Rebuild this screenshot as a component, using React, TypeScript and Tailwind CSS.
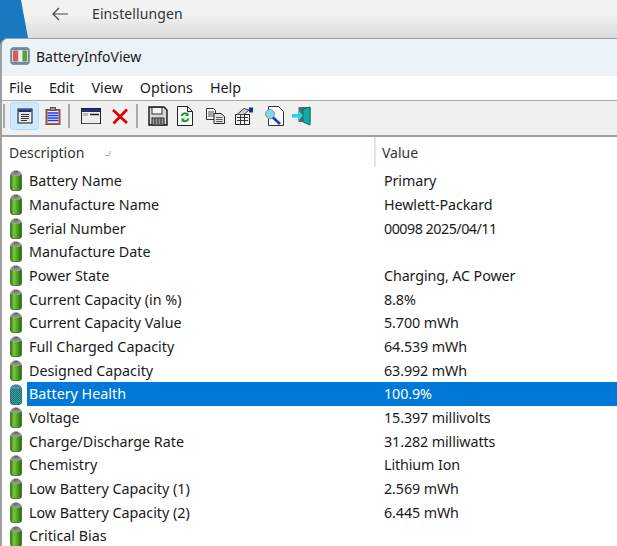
const font = "font-['Noto_Sans','Open_Sans',sans-serif]";

const rows: [string, string][] = [
	["Battery Name", "Primary"],
	["Manufacture Name", "Hewlett-Packard"],
	["Serial Number", "00098 2025/04/11"],
	["Manufacture Date", ""],
	["Power State", "Charging, AC Power"],
	["Current Capacity (in %)", "8.8%"],
	["Current Capacity Value", "5.700 mWh"],
	["Full Charged Capacity", "64.539 mWh"],
	["Designed Capacity", "63.992 mWh"],
	["Battery Health", "100.9%"],
	["Voltage", "15.397 millivolts"],
	["Charge/Discharge Rate", "31.282 milliwatts"],
	["Chemistry", "Lithium Ion"],
	["Low Battery Capacity (1)", "2.569 mWh"],
	["Low Battery Capacity (2)", "6.445 mWh"],
	["Critical Bias", ""],
];

const BatteryIcon = ({ selected }: { selected?: boolean }) => (
	<svg width="12" height="21" viewBox="0 0 12 21" className="ml-[1px] shrink-0">
		<defs>
			<linearGradient id="batt" x1="0" x2="1" y1="0" y2="0">
				<stop offset="0" stopColor="#2a7010" />
				<stop offset="0.3" stopColor="#7cc83c" />
				<stop offset="0.7" stopColor="#43981a" />
				<stop offset="1" stopColor="#26660e" />
			</linearGradient>
			<pattern id="battSel" width="2" height="2" patternUnits="userSpaceOnUse">
				<rect width="2" height="2" fill="#1668a8" />
				<rect width="1" height="1" fill="#3fae62" />
				<rect x="1" y="1" width="1" height="1" fill="#3fae62" />
			</pattern>
		</defs>
		<rect x="0.5" y="3" width="11" height="17.500" rx="2.500" fill={selected ? "url(#battSel)" : "url(#batt)"} stroke={selected ? "#1a5f90" : "#3b6b26"} strokeWidth="0.8" />
		<ellipse cx="6" cy="3.500" rx="5" ry="2.200" fill={selected ? "#5a8fb8" : "#8a8f88"} stroke={selected ? "#2f6f98" : "#a5a8a2"} strokeWidth="0.8" />
		<rect x="3.500" y="0.500" width="5" height="2.500" rx="1" fill={selected ? "#4a7fa8" : "#6f6f6f"} />
	</svg>
);

const AppIcon = () => (
	<svg width="20" height="18" viewBox="0 0 20 18">
		<rect x="0.500" y="0.500" width="19" height="17" rx="3" fill="#7088a0" stroke="#8a97a5" />
		<rect x="2" y="3" width="16" height="12" fill="#cfd6dc" />
		<rect x="3" y="3.500" width="5" height="11" rx="1" fill="#d8604f" />
		<rect x="9" y="3.500" width="3" height="11" fill="#eef0ee" />
		<rect x="12.500" y="3.500" width="4.500" height="11" rx="1" fill="#5f9e36" />
	</svg>
);

const ToolIcons = {
	props: () => (
		<svg width="16" height="16" viewBox="0 0 16 16">
			<rect x="1" y="1" width="14" height="14" fill="#e8e8e8" stroke="#111" />
			<rect x="1.500" y="1.500" width="13" height="2.500" fill="#1c2f80" />
			<path d="M4 6.500h8M4 8.500h8M4 10.500h8M4 12.500h6" stroke="#333" />
		</svg>
	),
	clip: () => (
		<svg width="16" height="18" viewBox="0 0 16 18">
			<rect x="1" y="2.500" width="14" height="15" fill="#a8653a" stroke="#7a5a3a" />
			<rect x="2.500" y="4" width="11" height="12" fill="#e8ecff" />
			<path d="M2.500 6h11M2.500 8.500h11M2.500 11h11M2.500 13.500h11" stroke="#2438e0" strokeWidth="1.400" />
			<rect x="5.500" y="0.500" width="5" height="3" fill="#8a9a8a" stroke="#555" />
		</svg>
	),
	win: () => (
		<svg width="20" height="16" viewBox="0 0 20 16">
			<rect x="0.500" y="0.500" width="19" height="15" fill="#ededed" stroke="#222" />
			<rect x="1" y="1" width="18" height="3" fill="#1c2f80" />
			<rect x="2" y="5" width="5" height="3" fill="#bbb" />
			<path d="M9 6.500h9" stroke="#222" strokeWidth="1.600" />
			<path d="M18.500 15.500H1" stroke="#555" />
		</svg>
	),
	del: () => (
		<svg width="18" height="17" viewBox="0 0 18 17">
			<path d="M2 2l14 13M16 1.500L2.500 15.500" stroke="#e00000" strokeWidth="2.800" />
		</svg>
	),
	save: () => (
		<svg width="20" height="20" viewBox="0 0 20 20">
			<path d="M1 1h15l3 3v15H1z" fill="#d8d8d8" stroke="#111" strokeWidth="1.400" />
			<rect x="4" y="1.500" width="10" height="6.500" fill="#f4f4f4" stroke="#333" />
			<rect x="4" y="12" width="12" height="7" fill="#9a9a9a" stroke="#222" />
			<path d="M7 13v5M10 13v5M13 13v5" stroke="#222" />
		</svg>
	),
	reload: () => (
		<svg width="16" height="20" viewBox="0 0 16 20">
			<path d="M.5 .5h10l5 5v14H.5z" fill="#fbfbfb" stroke="#222" />
			<path d="M10.500 .5v5h5" fill="none" stroke="#222" />
			<path d="M4.500 10a3.500 3.500 0 0 1 6-1.500M11.500 12.500a3.500 3.500 0 0 1-6 1.500" fill="none" stroke="#169a35" strokeWidth="2" />
			<path d="M11.500 6v4h-3.500M4.500 16.500v-4H8" fill="#169a35" />
		</svg>
	),
	copy: () => (
		<svg width="19" height="16" viewBox="0 0 19 16">
			<path d="M.5 .5h7l2 2v9h-9z" fill="#f3f3f3" stroke="#333" />
			<path d="M2 4h6M2 6h6M2 8h6" stroke="#555" />
			<path d="M8 5.500h7l3.500 3v7H8z" fill="#e4e4e4" stroke="#222" />
			<path d="M10 9.500h6.500M10 11.500h6.500M10 13.500h6.500" stroke="#555" />
		</svg>
	),
	html: () => (
		<svg width="20" height="18" viewBox="0 0 20 18">
			<path d="M1.500 7.500h14v10h-14z" fill="#f0f0f0" stroke="#222" />
			<path d="M3 7.500l7-6 5 1.500-5 4.500z" fill="#ccc" stroke="#444" />
			<path d="M3 10.500h11M3 13.500h11M6.500 8v9M10.500 8v9" stroke="#333" />
			<rect x="15" y="0.500" width="4" height="5" fill="#1c2f80" />
		</svg>
	),
	find: () => (
		<svg width="19" height="20" viewBox="0 0 19 20">
			<path d="M3.500 .5h10l5 5v14h-15z" fill="#fafafa" stroke="#333" />
			<circle cx="5" cy="8" r="4.500" fill="#7fd8e8" stroke="#7a9aaa" />
			<path d="M8 11.500l7 6.500" stroke="#1a3fc0" strokeWidth="2.800" />
		</svg>
	),
	exit: () => (
		<svg width="20" height="20" viewBox="0 0 20 20">
			<path d="M6.500 1h12v15h-12z" fill="#666" />
			<path d="M11 3l7-2v18l-7-3z" fill="#16a8a8" stroke="#0b6a6a" />
			<path d="M0 8h6V4l5 5.500L6 15v-3.500H0z" fill="#19d8e8" />
		</svg>
	),
};

const ToolButton = ({ children, active, className = "" }: { children: React.ReactNode; active?: boolean; className?: string }) => (
	<div className={`flex h-[28px] shrink-0 items-center justify-center rounded-[4px] border ${active ? "border-[#b4dcfa] bg-[#cde8ff]" : "border-transparent"} ${className}`}>
		{children}
	</div>
);

const Sep = () => <div className="h-[24px] w-[2px] bg-[#a8a8a8]" />;

const App = () => {
	return (
		<div className={`flex h-[546px] w-[617px] flex-col overflow-hidden bg-[#2c6ea6] ${font} text-[#1a1a1a]`}>
			<div className="flex h-[38px] shrink-0 items-start bg-gradient-to-b from-[#f2f2f2] from-40% to-[#dadada]">
				<div className="h-full w-[28px] bg-[#1878c0] [clip-path:polygon(0_0,21px_0,28px_100%,0_100%)]" />
				<svg width="18" height="14" viewBox="0 0 18 14" className="ml-[23px] mt-[7px]">
					<path d="M17 7H2M8 1L2 7l6 6" fill="none" stroke="#444" strokeWidth="1.200" />
				</svg>
				<span className="ml-[23px] text-[14px] leading-[28px] tracking-[0.1px] text-[#333]">Einstellungen</span>
			</div>
			<div className="flex min-h-0 flex-1 flex-col overflow-hidden rounded-tl-[8px] border-t border-l-2 border-[#a0a0a0] bg-white">
				<div className="flex h-[37px] shrink-0 items-start gap-[6px] bg-[#ecf3f8] pt-[8px] pl-[8px] text-[14px] leading-[20px]">
					<AppIcon />
					<span>BatteryInfoView</span>
				</div>
				<div className="flex h-[25px] shrink-0 items-center gap-[17px] border-b border-[#a8a8a8] pl-[7px] text-[14.300px]">
					<span>File</span>
					<span>Edit</span>
					<span>View</span>
					<span>Options</span>
					<span>Help</span>
				</div>
				<div className="flex h-[36px] shrink-0 items-start border-b-2 border-[#a0a0a0] bg-[#f0f0f0] pt-[1px] pl-[1px]">
					<div className="mt-[2px]"><Sep /></div>
					<ToolButton active className="ml-[5px] w-[29px]"><ToolIcons.props /></ToolButton>
					<ToolButton className="ml-[2px] w-[24px]"><ToolIcons.clip /></ToolButton>
					<div className="mt-[2px] ml-[3px]"><Sep /></div>
					<ToolButton className="ml-[9px] w-[24px]"><ToolIcons.win /></ToolButton>
					<ToolButton className="ml-[7px] w-[20px]"><ToolIcons.del /></ToolButton>
					<div className="mt-[2px] ml-[6px]"><Sep /></div>
					<ToolButton className="ml-[9px] w-[22px]"><ToolIcons.save /></ToolButton>
					<ToolButton className="ml-[6px] w-[20px]"><ToolIcons.reload /></ToolButton>
					<ToolButton className="ml-[9px] w-[23px]"><ToolIcons.copy /></ToolButton>
					<ToolButton className="ml-[6px] w-[22px]"><ToolIcons.html /></ToolButton>
					<ToolButton className="ml-[9px] w-[21px]"><ToolIcons.find /></ToolButton>
					<ToolButton className="ml-[6px] w-[22px]"><ToolIcons.exit /></ToolButton>
				</div>
				<div className="flex h-[30px] shrink-0 text-[14px] text-[#333]">
					<div className="flex w-[374px] items-center border-r-2 border-[#e5e5e5] pl-[7px]">
						<span>Description</span>
						<svg width="6" height="6" viewBox="0 0 6 6" className="ml-[21px] mt-[2px]">
							<path d="M0 5.500h4L5.500 1" fill="none" stroke="#aaa" />
						</svg>
					</div>
					<div className="flex items-center pl-[6px]">Value</div>
				</div>
				<div className="flex flex-col pt-[2px] text-[14.300px]">
					{rows.map(([name, value]) => {
						const selected = name === "Battery Health";
						return (
							<div key={name} className={`flex h-[23.700px] shrink-0 items-center ${selected ? "bg-[linear-gradient(to_right,white_25px,#0078d7_25px)] text-white" : ""}`}>
								<div className="flex w-[376px] items-center pl-[7px]">
									<BatteryIcon selected={selected} />
									<span className="ml-[7px] whitespace-nowrap">{name}</span>
								</div>
								<span className={`pl-[6px] whitespace-nowrap ${name === "Serial Number" ? "tracking-[-0.5px]" : "tracking-[-0.1px]"}`}>{value}</span>
							</div>
						);
					})}
				</div>
			</div>
		</div>
	);
};

export default App;
